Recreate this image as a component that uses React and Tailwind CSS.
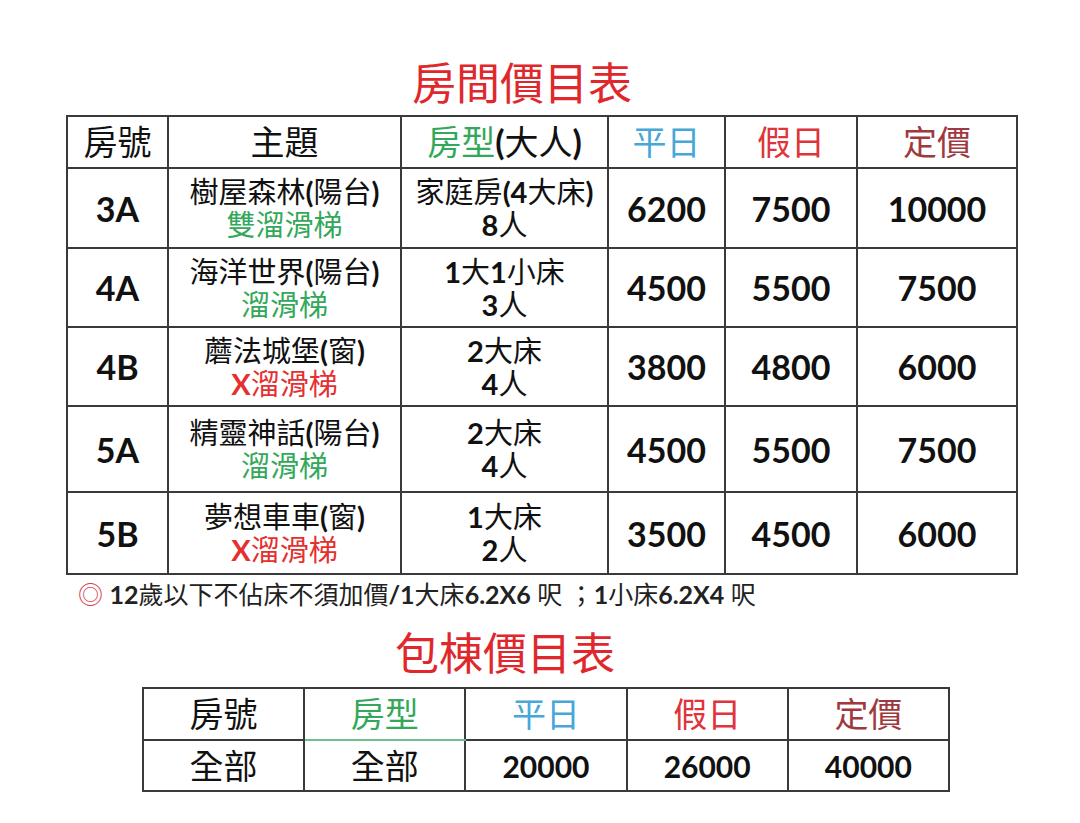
import React from "react";

// Latin runs are bold (Calibri-like), CJK runs stay regular.
function Mixed({ text }) {
  return text.split(/([\x21-\x7e]+)/).map((part, i) =>
    /[\x21-\x7e]/.test(part) ? (
      <span key={i} className="font-bold">{part}</span>
    ) : (
      <React.Fragment key={i}>{part}</React.Fragment>
    )
  );
}

const rooms = [
  { no: "3A", theme: "樹屋森林(陽台)", slide: "雙溜滑梯", ok: true, bed: "家庭房(4大床)", ppl: "8人", weekday: "6200", holiday: "7500", list: "10000", h: "h-[80px]" },
  { no: "4A", theme: "海洋世界(陽台)", slide: "溜滑梯", ok: true, bed: "1大1小床", ppl: "3人", weekday: "4500", holiday: "5500", list: "7500", h: "h-[79px]" },
  { no: "4B", theme: "蘑法城堡(窗)", slide: "X溜滑梯", ok: false, bed: "2大床", ppl: "4人", weekday: "3800", holiday: "4800", list: "6000", h: "h-[79px]" },
  { no: "5A", theme: "精靈神話(陽台)", slide: "溜滑梯", ok: true, bed: "2大床", ppl: "4人", weekday: "4500", holiday: "5500", list: "7500", h: "h-[86px]" },
  { no: "5B", theme: "夢想車車(窗)", slide: "X溜滑梯", ok: false, bed: "1大床", ppl: "2人", weekday: "3500", holiday: "4500", list: "6000", h: "h-[82px]" },
];

const cell = "border-2 border-[#3a3a3a] text-center align-middle p-0";

export default function App() {
  return (
    <div className="min-h-[823px] w-[1080px] bg-white text-[#111] font-[family-name:Lato,'Noto_Sans_CJK_TC',sans-serif] pt-[57px]">
      {/* Room price title */}
      <div className="flex justify-center pr-[36px] mb-[6px]">
        <h1 className="text-[44px] leading-[52px] font-normal text-[#e0282c]">房間價目表</h1>
      </div>

      {/* Room price table */}
      <table className="table-fixed border-collapse ml-[66px] w-[950px]">
        <colgroup>
          <col className="w-[101px]" />
          <col className="w-[233px]" />
          <col className="w-[207px]" />
          <col className="w-[117px]" />
          <col className="w-[132px]" />
          <col className="w-[160px]" />
        </colgroup>
        <thead>
          <tr className="text-[34px] leading-[40px]">
            <th className={`${cell} h-[52px] font-normal`}>房號</th>
            <th className={`${cell} font-normal`}>主題</th>
            <th className={`${cell} font-normal`}>
              <span className="text-[#34a85a]">房型</span>
              <Mixed text="(大人)" />
            </th>
            <th className={`${cell} font-normal text-[#47a8d8]`}>平日</th>
            <th className={`${cell} font-normal text-[#e0333a]`}>假日</th>
            <th className={`${cell} font-normal text-[#a0393f]`}>定價</th>
          </tr>
        </thead>
        <tbody>
          {rooms.map((r) => (
            <tr key={r.no}>
              <td className={`${cell} ${r.h} text-[34px] font-bold`}>{r.no}</td>
              <td className={`${cell} text-[29px] leading-[33px]`}>
                <div><Mixed text={r.theme} /></div>
                <div className={r.ok ? "text-[#34a85a]" : "text-[#e5302f]"}>
                  <Mixed text={r.slide} />
                </div>
              </td>
              <td className={`${cell} text-[29px] leading-[33px]`}>
                <div><Mixed text={r.bed} /></div>
                <div><Mixed text={r.ppl} /></div>
              </td>
              <td className={`${cell} text-[34px] font-bold`}>{r.weekday}</td>
              <td className={`${cell} text-[34px] font-bold`}>{r.holiday}</td>
              <td className={`${cell} text-[34px] font-bold`}>{r.list}</td>
            </tr>
          ))}
        </tbody>
      </table>

      {/* Footnote */}
      <p className="ml-[78px] mt-[4px] text-[25px] leading-[30px] text-[#222]">
        <span className="text-[#d8454d]">◎</span> <Mixed text="12歲以下不佔床不須加價/1大床6.2X6 呎 ；1小床6.2X4 呎" />
      </p>

      {/* Whole-house title */}
      <div className="flex justify-center pr-[70px] mt-[18px] mb-[8px]">
        <h2 className="text-[44px] leading-[52px] font-normal text-[#e0282c]">包棟價目表</h2>
      </div>

      {/* Whole-house table */}
      <table className="table-fixed border-collapse ml-[142px] w-[808px]">
        <tbody>
          <tr className="text-[34px] leading-[40px]">
            <td className={`${cell} h-[52px]`}>房號</td>
            <td className={`${cell} text-[#34a85a] border-b-[#6cc08a]`}>房型</td>
            <td className={`${cell} text-[#47a8d8]`}>平日</td>
            <td className={`${cell} text-[#e0333a]`}>假日</td>
            <td className={`${cell} text-[#a0393f]`}>定價</td>
          </tr>
          <tr className="leading-[40px]">
            <td className={`${cell} h-[51px] text-[34px]`}>全部</td>
            <td className={`${cell} text-[34px]`}>全部</td>
            <td className={`${cell} text-[30px] font-bold`}>20000</td>
            <td className={`${cell} text-[30px] font-bold`}>26000</td>
            <td className={`${cell} text-[30px] font-bold`}>40000</td>
          </tr>
        </tbody>
      </table>
    </div>
  );
}
